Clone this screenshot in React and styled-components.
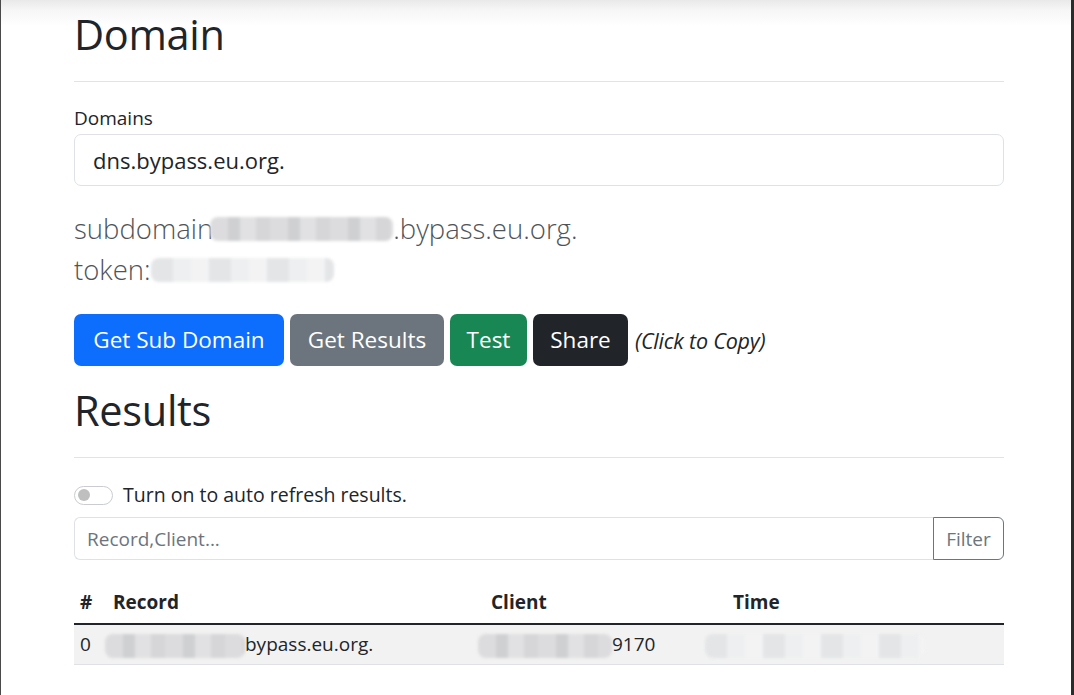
import styled, { createGlobalStyle } from 'styled-components';

const GlobalStyle = createGlobalStyle`
  html, body {
    margin: 0;
    padding: 0;
    background: #fff;
  }
  body {
    font-family: 'Open Sans', 'Noto Sans', sans-serif;
    color: #212529;
  }
  * { box-sizing: border-box; }
`;

// blurred stand-ins for redacted values
function Blur({ width, tone, shift }) {
  return <Smudge $w={width} $tone={tone} $shift={shift || 0} />;
}

export default function App() {
  return (
    <Frame>
      <GlobalStyle />
      <Container>
        <Heading>Domain</Heading>
        <Rule />

        <Label>Domains</Label>
        <BigInput readOnly value="dns.bypass.eu.org." />

        <Lead>
          <LeadLine>subdomain<Blur width={183} shift={-3} />.bypass.eu.org.</LeadLine>
          <LeadLine>token:<Blur width={183} tone="light" /></LeadLine>
        </Lead>

        <ButtonRow>
          <Button $bg="#0d6efd" $w={210}>Get Sub Domain</Button>
          <Button $bg="#6c757d" $w={154}>Get Results</Button>
          <Button $bg="#198754" $w={77}>Test</Button>
          <Button $bg="#212529" $w={95}>Share</Button>
          <Hint>(Click to Copy)</Hint>
        </ButtonRow>

        <Heading $top={18}>Results</Heading>
        <Rule />

        <SwitchRow>
          <Switch><Knob /></Switch>
          <SwitchLabel>Turn on to auto refresh results.</SwitchLabel>
        </SwitchRow>

        <InputGroup>
          <FilterInput placeholder="Record,Client..." />
          <FilterButton>Filter</FilterButton>
        </InputGroup>

        <Table>
          <thead>
            <tr>
              <Th $w={31} $first>#</Th>
              <Th $w={378}>Record</Th>
              <Th $w={242}>Client</Th>
              <Th>Time</Th>
            </tr>
          </thead>
          <tbody>
            <Row>
              <Td $first>0</Td>
              <Td><Blur width={140} shift={-8} />bypass.eu.org.</Td>
              <Td><Blur width={134} shift={-13} />9170</Td>
              <Td><Blur width={220} tone="light" shift={-28} /></Td>
            </Row>
          </tbody>
        </Table>
      </Container>
    </Frame>
  );
}

const Frame = styled.div`
  width: 1074px;
  height: 695px;
  overflow: hidden;
  border-left: 1px solid #4a4a4a;
  border-right: 3px solid #2b2b2b;
  background: linear-gradient(180deg, #e9e9e9 0px, #f6f6f6 10px, #ffffff 26px);
`;

const Container = styled.div`
  width: 930px;
  margin-left: 73px;
  padding-top: 8px;
`;

const Heading = styled.h1`
  margin: ${(p) => p.$top || 0}px 0 0;
  font-size: 41.5px;
  font-weight: 400;
  line-height: 52px;
  letter-spacing: -0.3px;
`;

const Rule = styled.hr`
  margin: 21px 0 0;
  border: none;
  border-top: 1px solid #e1e3e5;
`;

const Label = styled.div`
  margin-top: 24px;
  font-size: 19px;
  line-height: 24px;
`;

const BigInput = styled.input`
  display: block;
  width: 100%;
  height: 52px;
  margin-top: 4px;
  padding: 0 18px;
  font-family: inherit;
  font-size: 22px;
  color: #212529;
  border: 1px solid #dee2e6;
  border-radius: 7px;
  outline: none;
`;

const Lead = styled.div`
  margin-top: 22px;
  font-size: 27.5px;
  font-weight: 300;
  line-height: 41px;
  color: #505458;
`;

const LeadLine = styled.div`
  display: flex;
  align-items: center;
  white-space: nowrap;
`;

const Smudge = styled.span`
  display: inline-block;
  flex-shrink: 0;
  width: ${(p) => p.$w}px;
  height: 24px;
  margin-left: ${(p) => p.$shift}px;
  vertical-align: middle;
  border-radius: 8px;
  filter: blur(1.5px);
  background: ${(p) =>
    p.$tone === 'light'
      ? 'repeating-linear-gradient(90deg, #e4e5e7 0 22px, #eeeff0 22px 40px, #f3f3f4 40px 58px)'
      : 'repeating-linear-gradient(90deg, #dcdcde 0 18px, #cfd0d2 18px 30px, #e1e1e3 30px 46px, #d6d6d8 46px 60px)'};
`;

const ButtonRow = styled.div`
  display: flex;
  align-items: center;
  gap: 6px;
  margin-top: 24px;
`;

const Button = styled.button`
  width: ${(p) => p.$w}px;
  height: 52px;
  padding: 0;
  border: none;
  border-radius: 7px;
  background: ${(p) => p.$bg};
  color: #fff;
  font-family: inherit;
  font-size: 22.5px;
  line-height: 52px;
  text-align: center;
  white-space: nowrap;
`;

const Hint = styled.em`
  margin-left: 1px;
  font-size: 21.5px;
  color: #212529;
  letter-spacing: -0.2px;
`;

const SwitchRow = styled.div`
  display: flex;
  align-items: center;
  gap: 10px;
  margin-top: 26px;
  height: 22px;
`;

const Switch = styled.span`
  display: flex;
  align-items: center;
  width: 39px;
  height: 19px;
  padding: 0 3px;
  border: 1px solid #c9cdd1;
  border-radius: 10px;
`;

const Knob = styled.span`
  width: 12px;
  height: 12px;
  border-radius: 50%;
  background: #bfbfbf;
`;

const SwitchLabel = styled.span`
  font-size: 19.5px;
  line-height: 22px;
`;

const InputGroup = styled.div`
  display: flex;
  margin-top: 11px;
  height: 43px;
`;

const FilterInput = styled.input`
  flex: 1;
  min-width: 0;
  padding: 0 12px;
  font-family: inherit;
  font-size: 19px;
  border: 1px solid #dee2e6;
  border-right: none;
  border-radius: 6px 0 0 6px;
  outline: none;
  &::placeholder { color: #6c757d; }
`;

const FilterButton = styled.button`
  width: 71px;
  padding: 0;
  font-family: inherit;
  font-size: 19px;
  color: #6c757d;
  background: #fff;
  border: 1px solid #6c757d;
  border-radius: 0 6px 6px 0;
`;

const Table = styled.table`
  width: 100%;
  margin-top: 21px;
  border-collapse: collapse;
  table-layout: fixed;
`;

const Th = styled.th`
  width: ${(p) => (p.$w ? `${p.$w}px` : 'auto')};
  height: 43px;
  padding: 0 ${(p) => (p.$first ? 6 : 8)}px;
  text-align: left;
  font-size: 19px;
  font-weight: 700;
  border-bottom: 2px solid #212529;
`;

const Row = styled.tr`
  background: #f2f2f2;
  border-bottom: 1px solid #dee2e6;
`;

const Td = styled.td`
  height: 40px;
  padding: 0 ${(p) => (p.$first ? 6 : 8)}px;
  font-size: 19px;
  white-space: nowrap;
  vertical-align: middle;
`;
